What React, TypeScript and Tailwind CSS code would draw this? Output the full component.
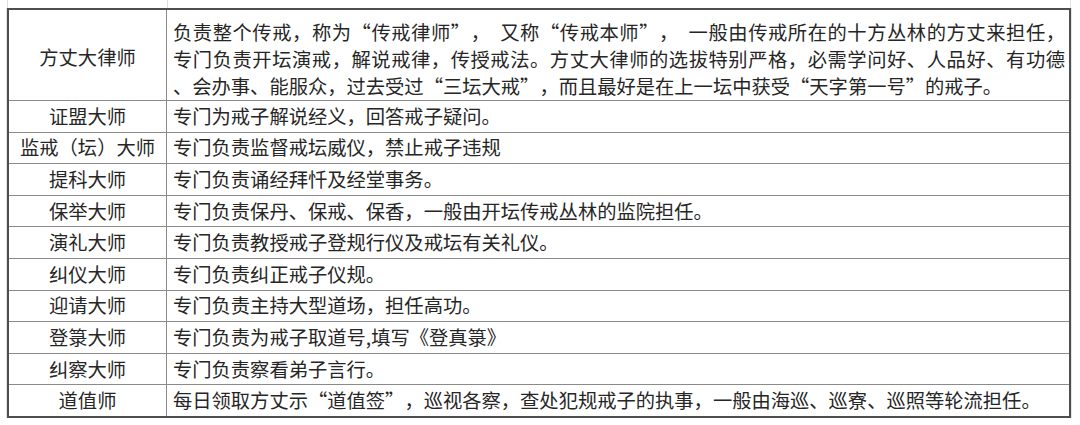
import type { ReactNode } from "react";

const rows: { title: string; desc: string }[] = [
  { title: "证盟大师", desc: "专门为戒子解说经义，回答戒子疑问。" },
  { title: "监戒（坛）大师", desc: "专门负责监督戒坛威仪，禁止戒子违规" },
  { title: "提科大师", desc: "专门负责诵经拜忏及经堂事务。" },
  { title: "保举大师", desc: "专门负责保丹、保戒、保香，一般由开坛传戒丛林的监院担任。" },
  { title: "演礼大师", desc: "专门负责教授戒子登规行仪及戒坛有关礼仪。" },
  { title: "纠仪大师", desc: "专门负责纠正戒子仪规。" },
  { title: "迎请大师", desc: "专门负责主持大型道场，担任高功。" },
  { title: "登箓大师", desc: "专门负责为戒子取道号,填写《登真箓》" },
  { title: "纠察大师", desc: "专门负责察看弟子言行。" },
  {
    title: "道值师",
    desc: "每日领取方丈示“道值签”，巡视各察，查处犯规戒子的执事，一般由海巡、巡寮、巡照等轮流担任。",
  },
];

// full-width curly quotes, like a Song face prints them
function q(text: string): ReactNode[] {
  return text.split(/([“”])/).map((part, i) => {
    if (part === "“") return <span key={i} className="inline-block w-[1em] text-right">“</span>;
    if (part === "”") return <span key={i} className="inline-block w-[1em] text-left">”</span>;
    return part;
  });
}

export default function App() {
  return (
    <div
      lang="zh-CN"
      className="w-[1080px] h-[425px] bg-white overflow-hidden text-[19.3px] text-[#262626] font-['Noto_Sans_CJK_SC',sans-serif]"
    >
      {/* faint sheet gridlines above the table */}
      <div className="flex h-2 pl-[7px]">
        <div className="w-[161px] border-l border-r border-[#dcdcdc]" />
        <div className="w-[903px] border-r border-[#e4e4e4]" />
      </div>

      <div className="flex">
        <div className="w-[7px] border-r border-[#e2e2e2]" />
        <div className="w-[1064px] border-2 border-[#4e4e4e]">
          {/* first row */}
          <div className="flex h-[90px]">
            <div className="w-[158px] shrink-0 border-r border-[#8a8a8a] flex items-center justify-center pt-1">
              方丈大律师
            </div>
            <div className="flex-1 flex flex-col justify-center pl-[6px] pr-[4px] pt-2 leading-[27px]">
              <div className="text-justify [text-align-last:justify] whitespace-pre">
                {q("负责整个传戒，称为“传戒律师”，  又称“传戒本师”，  一般由传戒所在的十方丛林的方丈来担任，")}
              </div>
              <div className="text-justify [text-align-last:justify]">
                专门负责开坛演戒，解说戒律，传授戒法。方丈大律师的选拔特别严格，必需学问好、人品好、有功德
              </div>
              <div className="whitespace-nowrap">
                {q("、会办事、能服众，过去受过“三坛大戒”，而且最好是在上一坛中获受“天字第一号”的戒子。")}
              </div>
            </div>
          </div>

          {rows.map((r) => (
            <div key={r.title} className="flex h-[31.6px] border-t border-[#8a8a8a]">
              <div className="w-[158px] shrink-0 border-r border-[#8a8a8a] flex items-center justify-center">
                {r.title}
              </div>
              <div className="flex-1 flex items-center pl-[6px] whitespace-nowrap">
                <span>{q(r.desc)}</span>
              </div>
            </div>
          ))}
        </div>
        <div className="w-[8px] border-l border-[#e4e4e4]" />
      </div>
    </div>
  );
}
